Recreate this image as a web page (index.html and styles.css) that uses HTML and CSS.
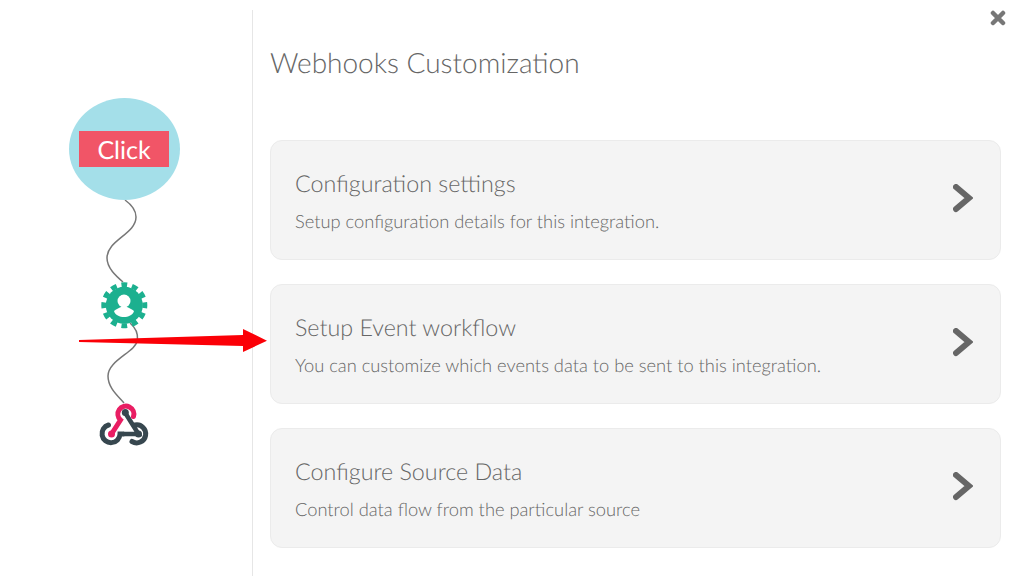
FILE: index.html
```html
<!DOCTYPE html>
<html lang="en">
<head>
<meta charset="utf-8">
<title>Webhooks Customization</title>
<link rel="stylesheet" href="styles.css">
</head>
<body>
<div class="page">
  <aside class="rail">
    <svg class="flow" viewBox="0 10 252 566" aria-label="Workflow">
      <path class="wire" d="M125 200C132 205 136 211 136 217C136 234 107 240 107 258C107 268 116 276 123 282"/>
      <path class="wire" d="M130 323C136 328 138 334 137.500 340C136 352 108 360 108 376C108 388 118 396 124 403"/>
      <ellipse class="bubble" cx="124.500" cy="149" rx="55.500" ry="51"/>
      <rect class="cta" x="79" y="131" width="90" height="36"/>
      <text class="cta-text" x="124" y="158.500">Click</text>
      <circle class="gear-body" cx="124.300" cy="305.300" r="18.500"/>
      <circle class="gear-teeth" cx="124.300" cy="305.300" r="20.500" pathLength="120"/>
      <circle class="gear-hole" cx="124" cy="301" r="6.500"/>
      <path class="gear-hole" d="M114 311C116 309 119 308 121 307H127C129 308 132 309 134 311C133 315 128 317 124 317C120 317 115 315 114 311Z"/>
      <path class="hook-dark" d="M125.300 413L138.500 434H123"/>
      <path class="hook-dark-ring" d="M108.500 425A9 9 0 1 0 120 434H123M135 425A9 9 0 1 1 132 441.500"/>
      <path class="hook-pink" d="M111.500 434L120.500 420A8 8 0 1 1 133.500 416.500"/>
      <circle class="hook-dot-pink" cx="111.500" cy="434" r="3.500"/>
      <circle class="hook-dot" cx="125.300" cy="412.500" r="3.500"/>
      <circle class="hook-dot" cx="138.500" cy="434" r="3.500"/>
    </svg>
  </aside>
  <main class="content">
    <h1 class="heading">Webhooks Customization</h1>
    <div class="cards">
      <section class="card">
        <div>
          <h2 class="card-title">Configuration settings</h2>
          <p class="card-desc">Setup configuration details for this integration.</p>
        </div>
        <svg class="chevron" viewBox="0 0 20 30"><path d="M3 3L16 14L3 25"/></svg>
      </section>
      <section class="card">
        <div>
          <h2 class="card-title">Setup Event workflow</h2>
          <p class="card-desc">You can customize which events data to be sent to this integration.</p>
        </div>
        <svg class="chevron" viewBox="0 0 20 30"><path d="M3 3L16 14L3 25"/></svg>
      </section>
      <section class="card">
        <div>
          <h2 class="card-title">Configure Source Data</h2>
          <p class="card-desc">Control data flow from the particular source</p>
        </div>
        <svg class="chevron" viewBox="0 0 20 30"><path d="M3 3L16 14L3 25"/></svg>
      </section>
    </div>
  </main>
  <svg class="close" viewBox="0 0 16 16" aria-label="Close"><path d="M3 3L13 13M13 3L3 13"/></svg>
  <svg class="arrow" viewBox="0 0 192 26"><path d="M0 12L164 7V1L188 12.700L164 24V18L0 14Z"/></svg>
</div>
</body>
</html>
```
FILE: styles.css
```css
* { box-sizing: border-box; }
html, body { margin: 0; padding: 0; }
body { background: #fff; font-family: Lato, "Liberation Sans", sans-serif; overflow: hidden; text-rendering: geometricPrecision; }
.page { position: relative; display: flex; width: 1024px; height: 576px; overflow: hidden; }
.rail { flex: 0 0 253px; margin-top: 10px; border-right: 1px solid #e6e6e6; }
.flow { display: block; width: 252px; height: 566px; }
.wire { fill: none; stroke: #777; stroke-width: 1.500; }
.bubble { fill: #a4dfe9; }
.cta { fill: #f15567; }
.cta-text { fill: #fff; font-size: 25px; text-anchor: middle; }
.gear-body { fill: #1cb08f; }
.gear-teeth { fill: none; stroke: #1cb08f; stroke-width: 5; stroke-dasharray: 5.500 4.500; stroke-dashoffset: 2.750; }
.gear-hole { fill: #fff; }
.hook-dark { fill: none; stroke: #37474f; stroke-width: 4.500; }
.hook-dark-ring { fill: none; stroke: #37474f; stroke-width: 5; stroke-linecap: round; }
.hook-pink { fill: none; stroke: #e91e63; stroke-width: 5; stroke-linecap: round; }
.hook-dot { fill: #37474f; }
.hook-dot-pink { fill: #e91e63; }
.content { flex: 1; padding: 0 23px 0 17px; }
.heading { margin: 43px 0 0; font-size: 28px; line-height: 38px; font-weight: 300; color: #666; }
.cards { display: flex; flex-direction: column; gap: 24px; margin-top: 59px; }
.card { display: flex; align-items: center; justify-content: space-between; height: 120px; padding: 0 24px; background: #f4f4f4; border: 1px solid #ebebeb; border-radius: 12px; }
.card-title { margin: 0; font-size: 23.300px; line-height: 30px; font-weight: 300; color: #666; }
.card-desc { margin: 11px 0 0; font-size: 18.300px; line-height: 24px; font-weight: 300; color: #666; }
.chevron { width: 20px; height: 30px; flex: none; margin: -2px 3px 0 0; }
.chevron path { fill: none; stroke: #666; stroke-width: 6; stroke-linecap: round; }
.close { position: absolute; left: 990px; top: 10px; width: 16px; height: 16px; }
.close path { fill: none; stroke: #777; stroke-width: 4.500; stroke-linecap: round; }
.arrow { position: absolute; left: 79px; top: 328px; width: 192px; height: 26px; }
.arrow path { fill: #fb0007; }
```
